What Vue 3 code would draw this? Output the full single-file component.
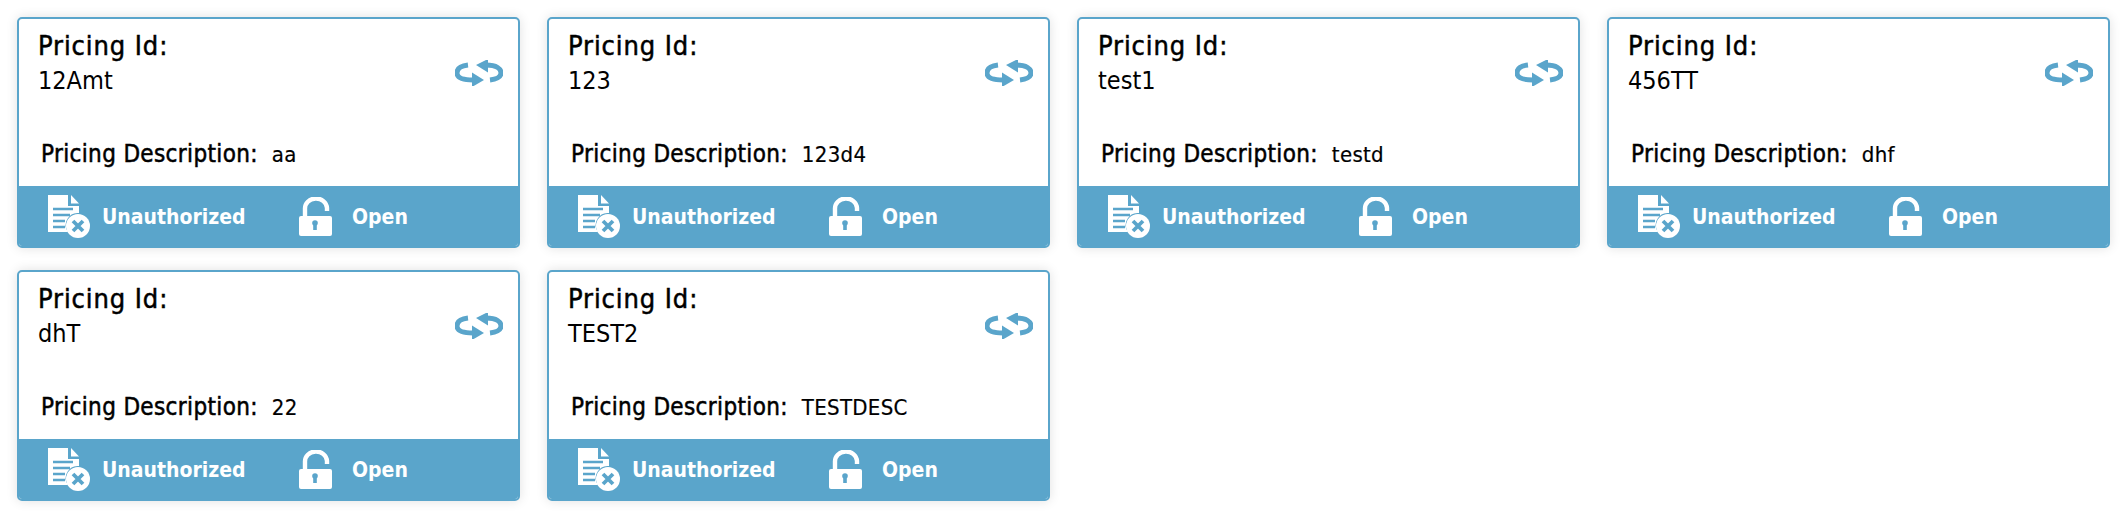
<script setup>
const pricings = [
  { id: "12Amt", description: "aa" },
  { id: "123", description: "123d4" },
  { id: "test1", description: "testd" },
  { id: "456TT", description: "dhf" },
  { id: "dhT", description: "22" },
  { id: "TEST2", description: "TESTDESC" }
];
</script>

<template>
  <div class="pricing-grid">
    <article v-for="item in pricings" :key="item.id" class="pricing-card">
      <div class="card-body">
        <div class="card-head">
          <div class="id-block">
            <div class="id-label">Pricing Id:</div>
            <div class="id-value">{{ item.id }}</div>
          </div>
          <svg class="swap-icon" viewBox="0 0 48 26" width="48" height="26">
            <path d="M13 5 C4 6 2 10 2 13 C2 17 6 20 18 20" fill="none" stroke="#5aa5cb" stroke-width="5" />
            <path d="M17 12.5 L29 20 L17 27 Z" fill="#5aa5cb" />
            <path d="M35 20 C44 19 46 16 46 13 C46 9 42 5 31 5" fill="none" stroke="#5aa5cb" stroke-width="5" />
            <path d="M33 -1 L21 5 L33 12.5 Z" fill="#5aa5cb" />
          </svg>
        </div>
        <div class="desc-row">
          <span class="desc-label">Pricing Description:</span>
          <span class="desc-value">{{ item.description }}</span>
        </div>
      </div>
      <div class="card-foot">
        <div class="status status-auth">
          <svg class="doc-icon" viewBox="0 0 42 44" width="42" height="44">
            <path d="M0 0 H20 V11 H31 V18 A12 12 0 0 0 20 37 H0 Z" fill="#fff" />
            <path d="M23 0 L31 8.5 H23 Z" fill="#fff" />
            <path d="M5 14 H25 M5 20 H22 M5 26 H17 M5 32 H17" stroke="#5aa5cb" stroke-width="2.4" />
            <circle cx="30" cy="31" r="12" fill="#fff" />
            <path d="M25 26 L35 36 M35 26 L25 36" stroke="#5aa5cb" stroke-width="3.8" />
          </svg>
          <span>Unauthorized</span>
        </div>
        <div class="status status-lock">
          <svg class="lock-icon" viewBox="0 0 34 39" width="34" height="39">
            <path d="M6 19 V12 A11 10 0 0 1 28 11 V14" fill="none" stroke="#fff" stroke-width="4.4" />
            <rect x="0" y="19" width="33" height="20" rx="2" fill="#fff" />
            <circle cx="16" cy="26" r="2.8" fill="#5aa5cb" />
            <rect x="14.2" y="26" width="3.6" height="7" fill="#5aa5cb" />
          </svg>
          <span>Open</span>
        </div>
      </div>
    </article>
  </div>
</template>

<style>
body {
  background: #fff;
}
</style>

<style scoped>
.pricing-grid {
  display: grid;
  grid-template-columns: repeat(4, 503px);
  grid-auto-rows: 231px;
  gap: 22px 27px;
  padding: 17px 17px;
  font-family: "DejaVu Sans Condensed", "DejaVu Sans", sans-serif;
  color: #000;
}

.pricing-card {
  display: flex;
  flex-direction: column;
  box-sizing: border-box;
  border: 2px solid #5aa5cb;
  border-radius: 5px;
  background: #fff;
  box-shadow: 0 0 12px rgba(0, 0, 0, 0.12);
  overflow: hidden;
}

.card-body {
  flex: 1;
  display: flex;
  flex-direction: column;
  justify-content: space-between;
  padding: 9px 19px 14px;
}

.card-head {
  display: flex;
  justify-content: space-between;
  align-items: center;
}

.id-label {
  font-size: 27px;
  line-height: 36px;
  -webkit-text-stroke: 0.5px #000;
  letter-spacing: 0.9px;
}

.id-value {
  font-size: 25px;
  line-height: 34px;
}

.swap-icon {
  margin-right: -4px;
  margin-top: 20px;
}

.desc-row {
  display: flex;
  align-items: baseline;
  gap: 14px;
  padding-left: 3px;
  font-size: 24px;
  line-height: 34px;
}

.desc-label {
  -webkit-text-stroke: 0.5px #000;
  letter-spacing: 0.35px;
}

.desc-value {
  font-size: 22px;
  letter-spacing: 0.3px;
  -webkit-text-stroke: 0.2px #000;
}

.card-foot {
  height: 60px;
  flex: none;
  display: flex;
  align-items: center;
  box-sizing: border-box;
  padding: 1px 0 0 29px;
  background: #5aa5cb;
  color: #fff;
  font-size: 21px;
  font-weight: 700;
}

.status {
  display: flex;
  align-items: center;
}

.status-auth {
  width: 251px;
  gap: 12px;
}

.status-lock {
  gap: 19px;
}
</style>
